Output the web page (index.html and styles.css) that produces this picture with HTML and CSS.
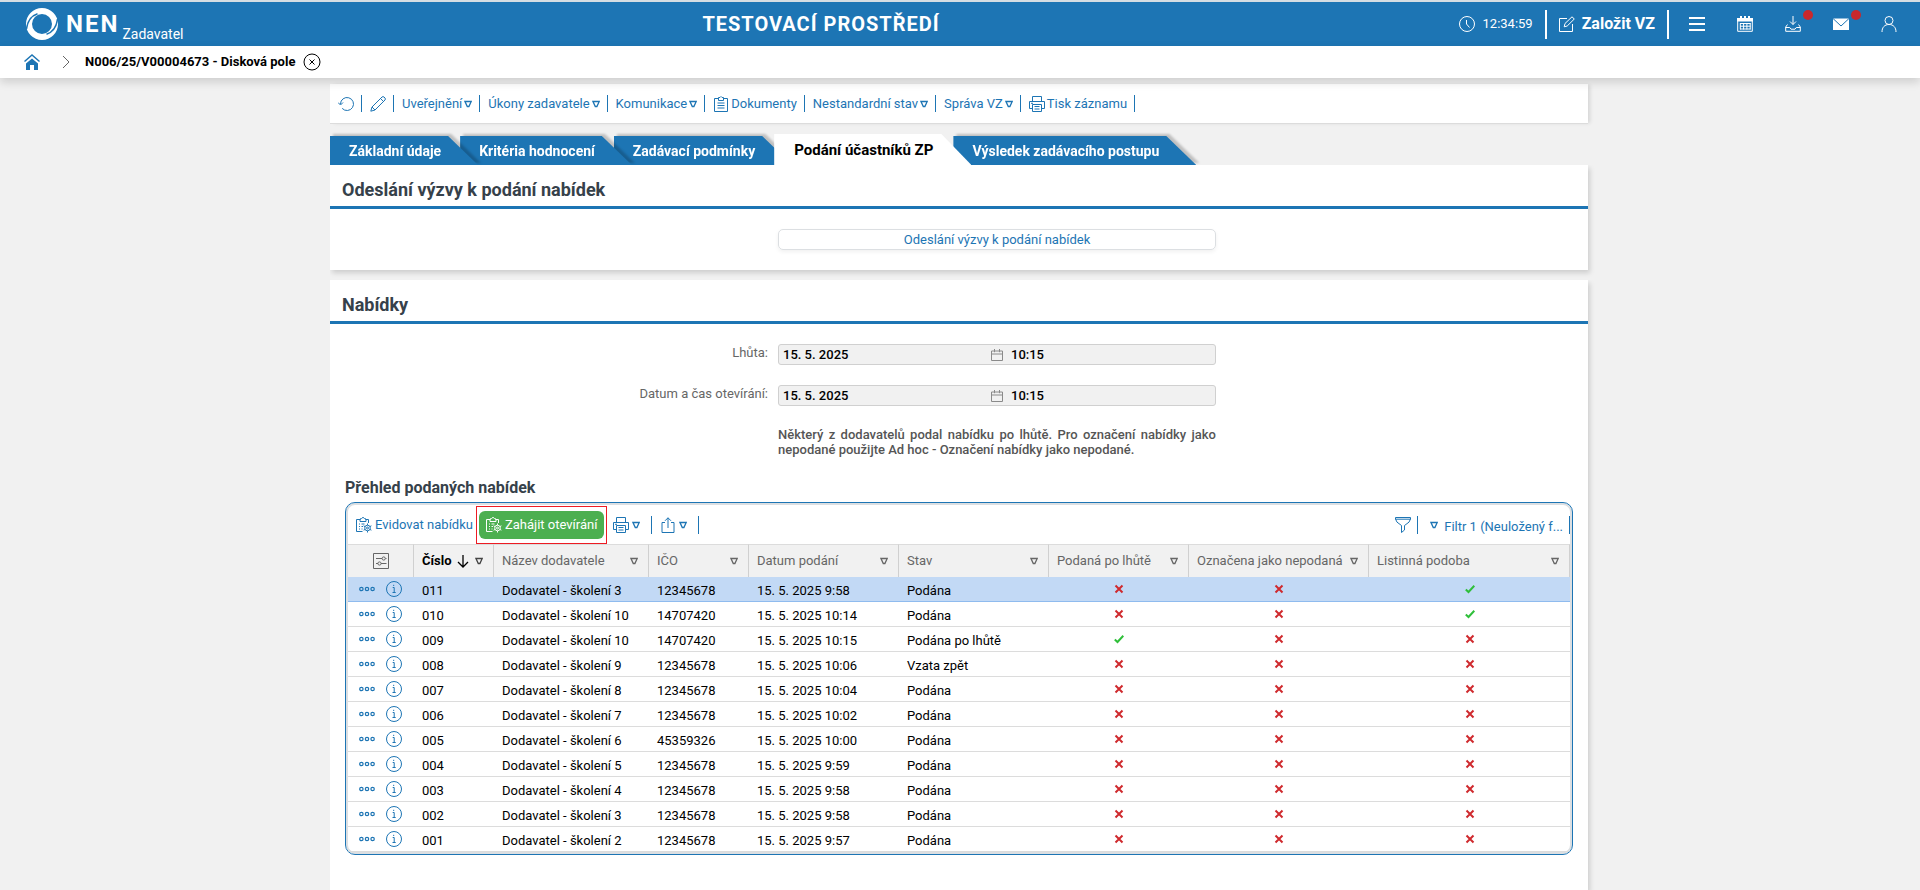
FILE: index.html
```html
<!DOCTYPE html>
<html lang="cs">
  <head>
    <meta charset="utf-8">
    <title>NEN - Disková pole</title>
    <link rel="stylesheet" href="styles.css">
  </head>
  <body>
    <svg class="sprite" aria-hidden="true">
      <symbol id="i-tri" viewBox="0 0 8 8"><path d="M1 1.5h6.2L4.9 6.5H3.3z"/></symbol>
      <symbol id="i-print" viewBox="0 0 16 16"><path d="M3.5 5.5v-5h9v5M3.5 12.500h-3v-7h15v7h-3M3.500 8.500h9v7h-9zM5.500 10.500h5M5.500 13h5M2 7.300h2"/></symbol>
      <symbol id="i-clip" viewBox="0 0 16 16"><path d="M5.500 2.500h-4v13h13v-13h-4M5.500 4.500v-3h1.500l1-1 1 1h1.500v3zM4.500 7h7M4.500 9.500h7M4.500 12h7"/></symbol>
      <symbol id="i-clipgear" viewBox="0 0 16 16">
        <path d="M4.500 2.500h-4v12h6M9.500 2.500h3v3.500M4 4.500v-2.500l1.500-.5 1.500-1.200 1.500 1.200 1.500.5v2.500zM3 7h1M5.500 7h3M3 9.500h1M5.500 9.500h1.500M3 12h1M5.500 12h1"/>
        <path d="M11.500 6.500v1.700M11.500 13.800v1.700M7.600 8.800l1.500.8M13.900 12.400l1.500.8M7.600 13.200l1.500-.8M13.900 9.600l1.500-.8"/>
        <circle cx="11.500" cy="11" r="2.800"/><circle cx="11.500" cy="11" r="1"/>
      </symbol>
      <symbol id="i-info" viewBox="0 0 16 16"><circle cx="8" cy="8" r="7.500"/><path d="M6.700 6.500h1.500v5M6.500 11.500h3.200M7.700 3.800v1.200"/></symbol>
      <symbol id="i-dots" viewBox="0 0 16 6"><circle cx="2.400" cy="3" r="1.700"/><circle cx="8" cy="3" r="1.700"/><circle cx="13.600" cy="3" r="1.700"/></symbol>
      <symbol id="i-no" viewBox="0 0 10 10"><path d="M1.500 1.500l7 7M8.500 1.500l-7 7"/></symbol>
      <symbol id="i-yes" viewBox="0 0 10 10"><path d="M.8 5.500l2.700 2.500L9.300 1.800"/></symbol>
      <symbol id="i-cal" viewBox="0 0 12 12"><path d="M.5 2h11v9.500H.5zM.5 5h11M3.500 0v3.200M8.500 0v3.200"/></symbol>
    </svg>

    <header class="topbar">
      <a href="#" class="brand">
        <svg class="logo" viewBox="0 0 32 32">
          <path fill-rule="evenodd" fill="#fff" d="M16 0a16 16 0 1 1 0 32a16 16 0 1 1 0-32zM16 6a10 10 0 1 0 0 20a10 10 0 1 0 0-20z"/>
          <path fill="none" stroke="#1d75b4" stroke-width="1.500" d="M.5 21C1.500 13 5 8 11.500 5.800M31.500 11C30.500 19 27 24 20.500 26.200"/>
        </svg>
        <span class="brand-name">NEN</span>
        <span class="brand-role">Zadavatel</span>
      </a>
      <div class="env">TESTOVACÍ PROSTŘEDÍ</div>
      <div class="top-right">
        <div class="clock">
          <svg class="ico" viewBox="0 0 16 16"><circle cx="8" cy="8" r="7.500"/><path d="M7.500 4v4l3 3.500"/></svg>
          <span>12:34:59</span>
        </div>
        <button class="new-vz">
          <svg class="ico" viewBox="0 0 16 16"><path d="M8 2.500H.5v13h13V8M6 7.500L13 .8l2.300 2.200L8.200 10l-3 .8z"/></svg>
          Založit VZ
        </button>
        <nav class="top-icons">
          <button aria-label="Menu"><svg class="ico thick" viewBox="0 0 16 16"><path d="M0 2h16M0 8h16M0 14h16"/></svg></button>
          <button aria-label="Kalendář">
            <svg class="ico" viewBox="0 0 16 16"><path class="solid" d="M0 2h16v3.500H0zM3 0h2v3H3zM7 0h2v3H7zM11 0h2v3h-2z"/><path d="M.7 4v11.300h14.600V4M3 7.500h10.500M3 10.200h10.500M3 13h10.500M3.300 7v6.500M6.600 7v6.500M9.900 7v6.500M13.200 7v6.500"/></svg>
          </button>
          <button aria-label="Stažené soubory">
            <svg class="ico" viewBox="0 0 16 16"><path d="M8 0v8.500M5 5.500l3 3 3-3M2.500 8.500L.7 11v4.300h14.600V11l-1.800-2.500M.7 11.500h4l1.300 1.700h4l1.300-1.700h4"/></svg>
            <span class="dot"></span>
          </button>
          <button aria-label="Zprávy">
            <svg class="ico" viewBox="0 0 16 16"><path class="solid" d="M0 2.500h16v11.500H0z"/><path class="cut" d="M0 2.500l8 7.500 8-7.500"/></svg>
            <span class="dot"></span>
          </button>
          <button aria-label="Uživatel"><svg class="ico" viewBox="0 0 16 16"><circle cx="8" cy="4.500" r="4"/><path d="M1 16c0-4.500 2.500-7.500 7-7.500s7 3 7 7.500"/></svg></button>
        </nav>
      </div>
    </header>

    <nav class="crumbs">
      <a href="#" class="home" aria-label="Domů">
        <svg viewBox="0 0 16 16"><path fill="#1d75b4" d="M8 4.500l6 5V16h-4v-5H6v5H2V9.500z"/><path fill="none" stroke="#1d75b4" stroke-width="1.500" d="M.5 7.500L8 1l7.500 6.500"/></svg>
      </a>
      <svg class="chevron" viewBox="0 0 8 14"><path d="M1 1l6 6-6 6"/></svg>
      <span class="crumb">N006/25/V00004673 - Disková pole</span>
      <button class="close" aria-label="Zavřít"><svg viewBox="0 0 18 18"><circle cx="9" cy="9" r="8"/><path d="M6.500 6.500l5 5M11.500 6.500l-5 5"/></svg></button>
    </nav>

    <main>
      <div class="toolbar">
        <button aria-label="Obnovit"><svg class="ico" viewBox="0 0 16 16"><path d="M2.500 8a6.500 6.500 0 1 1 1.700 4.400M0 6.500l2.500 2.500L5 6.500"/></svg></button>
        <button aria-label="Upravit"><svg class="ico" viewBox="0 0 16 16"><path d="M.8 15.200L2 11 12 1q1-.8 2 0l1 1q.8 1 0 2L5 14zM2 11l3 3M10.500 2.500l3 3"/></svg></button>
        <button>Uveřejnění <svg class="tri"><use href="#i-tri"/></svg></button>
        <button>Úkony zadavatele <svg class="tri"><use href="#i-tri"/></svg></button>
        <button>Komunikace <svg class="tri"><use href="#i-tri"/></svg></button>
        <button><svg class="ico"><use href="#i-clip"/></svg> Dokumenty</button>
        <button>Nestandardní stav <svg class="tri"><use href="#i-tri"/></svg></button>
        <button>Správa VZ <svg class="tri"><use href="#i-tri"/></svg></button>
        <button><svg class="ico"><use href="#i-print"/></svg> Tisk záznamu</button>
      </div>

      <ul class="tabs">
        <li><button>Základní údaje</button></li>
        <li><button>Kritéria hodnocení</button></li>
        <li><button>Zadávací podmínky</button></li>
        <li class="active"><button>Podání účastníků ZP</button></li>
        <li><button>Výsledek zadávacího postupu</button></li>
      </ul>

      <section class="card">
        <h2>Odeslání výzvy k podání nabídek</h2>
        <div class="form">
          <button class="wide-btn">Odeslání výzvy k podání nabídek</button>
        </div>
      </section>

      <section class="card last">
        <h2>Nabídky</h2>
        <div class="form">
          <label for="lhuta">Lhůta:</label>
          <div class="field">
            <input type="text" id="lhuta" class="date" value="15. 5. 2025" readonly>
            <svg class="cal"><use href="#i-cal"/></svg>
            <input type="text" class="time" aria-label="Lhůta - čas" value="10:15" readonly>
          </div>
          <label for="otevirani">Datum a čas otevírání:</label>
          <div class="field">
            <input type="text" id="otevirani" class="date" value="15. 5. 2025" readonly>
            <svg class="cal"><use href="#i-cal"/></svg>
            <input type="text" class="time" aria-label="Otevírání - čas" value="10:15" readonly>
          </div>
          <p class="note">Některý z dodavatelů podal nabídku po lhůtě. Pro označení nabídky jako nepodané použijte Ad hoc - Označení nabídky jako nepodané.</p>
        </div>

        <h3>Přehled podaných nabídek</h3>
        <div class="grid-box">
          <div class="grid-bar">
            <button class="bar-btn"><svg class="ico"><use href="#i-clipgear"/></svg> Evidovat nabídku</button>
            <div class="marked">
              <button class="open-btn"><svg class="ico"><use href="#i-clipgear"/></svg> Zahájit otevírání</button>
            </div>
            <button class="bar-btn sep" aria-label="Tisk"><svg class="ico"><use href="#i-print"/></svg> <svg class="tri"><use href="#i-tri"/></svg></button>
            <button class="bar-btn sep" aria-label="Export"><svg class="ico" viewBox="0 0 16 16"><path d="M5 5.500H2v10h12v-10h-3M8 11V.8M5 3.800l3-3 3 3"/></svg> <svg class="tri"><use href="#i-tri"/></svg></button>
            <div class="filter">
              <button class="bar-btn sep" aria-label="Filtr"><svg class="ico" viewBox="0 0 16 16"><path d="M.5.500h15v1.500Q15.500 5 9.500 8.500V13l-3 2.500v-7Q.5 5 .5 2zM.5 2.200h15"/></svg></button>
              <button class="bar-btn sep filter-name"><svg class="tri"><use href="#i-tri"/></svg> <span>Filtr 1 (Neuložený f...</span></button>
            </div>
          </div>
          <table>
            <colgroup>
              <col class="c-act"><col class="c-num"><col class="c-name"><col class="c-ico"><col class="c-date"><col class="c-state"><col class="c-late"><col class="c-mark"><col>
            </colgroup>
            <thead>
              <tr>
                <th class="settings"><svg class="ico" viewBox="0 0 16 16"><path d="M.5.500h15v15H.5zM3 5.500h6M12.500 5.500h1M3 10.500h2M8 10.500h5.500"/><circle cx="10.700" cy="5.500" r="1.600"/><circle cx="6.500" cy="10.500" r="1.600"/></svg></th>
                <th class="sorted"><div>Číslo <svg class="arrow" viewBox="0 0 12 14"><path d="M6 1v12M1 8l5 5 5-5"/></svg> <svg class="tri"><use href="#i-tri"/></svg></div></th>
                <th><div>Název dodavatele <svg class="tri"><use href="#i-tri"/></svg></div></th>
                <th><div>IČO <svg class="tri"><use href="#i-tri"/></svg></div></th>
                <th><div>Datum podání <svg class="tri"><use href="#i-tri"/></svg></div></th>
                <th><div>Stav <svg class="tri"><use href="#i-tri"/></svg></div></th>
                <th><div>Podaná po lhůtě <svg class="tri"><use href="#i-tri"/></svg></div></th>
                <th><div>Označena jako nepodaná <svg class="tri"><use href="#i-tri"/></svg></div></th>
                <th><div>Listinná podoba <svg class="tri"><use href="#i-tri"/></svg></div></th>
              </tr>
            </thead>
            <tbody id="rows"></tbody>
          </table>
        </div>
      </section>
    </main>

    <script>
      // cislo, dodavatel, ico, datum, stav, po lhute, nepodana, listinna
      const offers = [
        ["011", "Dodavatel - školení 3", "12345678", "15. 5. 2025 9:58", "Podána", 0, 0, 1],
        ["010", "Dodavatel - školení 10", "14707420", "15. 5. 2025 10:14", "Podána", 0, 0, 1],
        ["009", "Dodavatel - školení 10", "14707420", "15. 5. 2025 10:15", "Podána po lhůtě", 1, 0, 0],
        ["008", "Dodavatel - školení 9", "12345678", "15. 5. 2025 10:06", "Vzata zpět", 0, 0, 0],
        ["007", "Dodavatel - školení 8", "12345678", "15. 5. 2025 10:04", "Podána", 0, 0, 0],
        ["006", "Dodavatel - školení 7", "12345678", "15. 5. 2025 10:02", "Podána", 0, 0, 0],
        ["005", "Dodavatel - školení 6", "45359326", "15. 5. 2025 10:00", "Podána", 0, 0, 0],
        ["004", "Dodavatel - školení 5", "12345678", "15. 5. 2025 9:59", "Podána", 0, 0, 0],
        ["003", "Dodavatel - školení 4", "12345678", "15. 5. 2025 9:58", "Podána", 0, 0, 0],
        ["002", "Dodavatel - školení 3", "12345678", "15. 5. 2025 9:58", "Podána", 0, 0, 0],
        ["001", "Dodavatel - školení 2", "12345678", "15. 5. 2025 9:57", "Podána", 0, 0, 0]
      ];

      function flag(value) {
        return value
          ? '<td class="flag"><svg class="yes"><use href="#i-yes"/></svg></td>'
          : '<td class="flag"><svg class="no"><use href="#i-no"/></svg></td>';
      }

      document.getElementById("rows").innerHTML = offers.map(function (o, i) {
        return '<tr' + (i === 0 ? ' class="selected"' : '') + '>' +
          '<td class="actions">' +
          '<button aria-label="Akce"><svg class="dots"><use href="#i-dots"/></svg></button>' +
          '<button aria-label="Detail"><svg class="ico"><use href="#i-info"/></svg></button></td>' +
          o.slice(0, 5).map(function (v) { return '<td>' + v + '</td>'; }).join('') +
          o.slice(5).map(flag).join('') + '</tr>';
      }).join('');
    </script>
  </body>
</html>
```
FILE: styles.css
```css
* {
  box-sizing: border-box;
}
body {
  margin: 0;
  min-height: 100vh;
  display: flex;
  flex-direction: column;
  background: #f1f1f1;
  color: #000;
  font-family: Roboto, "Liberation Sans", sans-serif;
  font-size: 13px;
  line-height: 16px;
}
button {
  padding: 0;
  border: 0;
  background: none;
  color: inherit;
  font: inherit;
  cursor: pointer;
}
.sprite {
  position: absolute;
  width: 0;
  height: 0;
}
.ico {
  width: 16px;
  height: 16px;
  flex: none;
  fill: none;
  stroke: currentColor;
  stroke-width: 1;
}
.tri {
  width: 8px;
  height: 8px;
  flex: none;
  fill: none;
  stroke: currentColor;
  stroke-width: 1.3;
}

/* top bar */
.topbar {
  display: flex;
  justify-content: space-between;
  align-items: center;
  height: 46px;
  padding: 0 7px 0 26px;
  border-top: 2px solid #d5dde3;
  background: #1d75b4;
  color: #fff;
}
.brand {
  display: flex;
  align-items: center;
  color: #fff;
  text-decoration: none;
}
.logo {
  width: 32px;
  height: 32px;
  margin-right: 8px;
}
.brand-name {
  font-size: 24px;
  font-weight: 700;
  letter-spacing: 2px;
}
.brand-role {
  align-self: flex-end;
  margin-left: 3px;
  font-size: 14px;
  line-height: 12px;
}
.env {
  font-size: 20px;
  font-weight: 700;
  letter-spacing: 1px;
}
.top-right {
  display: flex;
  align-items: center;
}
.clock,
.new-vz {
  display: flex;
  align-items: center;
  gap: 8px;
  height: 29px;
  padding-right: 12px;
  border-right: 2px solid #fff;
}
.new-vz {
  padding-left: 12px;
  gap: 7px;
  font-size: 16px;
  font-weight: 700;
}
.top-icons {
  display: flex;
  margin-left: 4px;
}
.top-icons button {
  position: relative;
  display: flex;
  justify-content: center;
  align-items: center;
  width: 48px;
  height: 44px;
}
.thick {
  stroke-width: 2;
}
.solid {
  fill: #fff;
  stroke: none;
}
.cut {
  stroke: #1d75b4;
}
.dot {
  position: absolute;
  top: 8px;
  right: 4px;
  width: 10px;
  height: 10px;
  border-radius: 50%;
  background: #c9282d;
}

/* breadcrumbs */
.crumbs {
  position: relative;
  z-index: 10;
  display: flex;
  align-items: center;
  height: 32px;
  padding-left: 24px;
  background: #fff;
  box-shadow: 0 4px 10px rgba(0, 0, 0, .15);
}
.home {
  width: 16px;
  height: 16px;
}
.home svg,
.close svg {
  display: block;
}
.chevron {
  width: 8px;
  height: 14px;
  margin: 0 15px 0 22px;
  fill: none;
  stroke: #666;
}
.crumb {
  font-weight: 700;
}
.close {
  width: 18px;
  height: 18px;
  margin-left: 8px;
}
.close svg {
  fill: none;
  stroke: #000;
}

main {
  display: flex;
  flex-direction: column;
  flex: 1;
  width: 100%;
  max-width: 1260px;
  margin: 6px auto 0;
  padding-right: 2px;
}

/* record toolbar */
.toolbar {
  display: flex;
  align-items: center;
  height: 40px;
  border-bottom: 1px solid #dcdcdc;
  background: #fff;
  box-shadow: 3px 0 4px -1px rgba(0, 0, 0, .12);
  color: #1d75b4;
}
.toolbar button {
  display: flex;
  align-items: center;
  gap: 2px;
  height: 17px;
  padding: 0 7px 0 8px;
  border-right: 1px solid #1d75b4;
}

/* tabs */
.tabs {
  display: flex;
  align-items: flex-end;
  height: 41px;
  margin: 0;
  padding: 0;
  list-style: none;
}
.tabs li {
  position: relative;
  margin-right: -18px;
  filter: drop-shadow(3px -2px 1px rgba(0, 0, 0, .2));
}
.tabs li:nth-child(1) {
  z-index: 3;
}
.tabs li:nth-child(2) {
  z-index: 2;
}
.tabs li.active {
  z-index: 4;
  filter: none;
}
.tabs button {
  display: block;
  height: 29px;
  padding: 0 37px 0 19px;
  background: #1d75b4;
  clip-path: polygon(0 0, calc(100% - 30px) 0, 100% 100%, 0 100%);
  color: #fff;
  font-size: 14px;
  font-weight: 700;
}
.tabs .active button {
  height: 31px;
  padding: 0 38px 0 20px;
  background: #fff;
  color: #000;
  font-size: 15px;
}

/* cards */
.card {
  position: relative;
  z-index: 5;
  margin-bottom: 10px;
  background: #fff;
  box-shadow: 2px 3px 5px rgba(0, 0, 0, .15);
  clip-path: inset(0 -10px -10px 0);
}
.card.last {
  flex: 1;
  margin-bottom: 0;
}
h2 {
  margin: 0;
  height: 44px;
  padding: 13px 12px 0;
  border-bottom: 3px solid #1d75b4;
  color: #36414a;
  font-size: 18px;
  line-height: 24px;
}
.form {
  display: grid;
  grid-template-columns: 438px 438px;
  column-gap: 10px;
  row-gap: 20px;
  padding: 20px 0;
}
.form label {
  padding-top: 1px;
  color: #666;
  text-align: right;
}
.wide-btn {
  grid-column: 2;
  height: 21px;
  border: 1px solid #dcdfe2;
  border-radius: 5px;
  box-shadow: 0 2px 4px rgba(0, 0, 0, .06);
  color: #1d75b4;
}
.field {
  display: flex;
  align-items: center;
  height: 21px;
  border: 1px solid #d0d0d0;
  border-radius: 3px;
  background: #f1f1f1;
}
.field input {
  min-width: 0;
  padding: 0;
  border: 0;
  background: none;
  font: inherit;
  font-weight: 500;
  outline: none;
}
.field .date {
  width: 212px;
  padding-left: 4px;
}
.cal {
  width: 12px;
  height: 12px;
  margin-right: 8px;
  fill: none;
  stroke: #8a8a8a;
}
.time {
  flex: 1;
}
.note {
  grid-column: 2;
  margin: 1px 0 0;
  color: #555;
  font-weight: 500;
  line-height: 15px;
  text-align: justify;
}

/* offers grid */
h3 {
  margin: 0;
  padding-left: 15px;
  color: #36414a;
  font-size: 16px;
  line-height: 22px;
}
.grid-box {
  margin: 3px 15px 0;
  overflow: hidden;
  padding: 2px;
  border: 1px solid #1d75b4;
  border-radius: 10px;
  box-shadow: inset 0 0 0 2px #dcdfe2;
}
.grid-bar {
  display: flex;
  align-items: center;
  height: 39px;
  padding: 1px 0 0 8px;
  color: #1d75b4;
}
.bar-btn {
  display: flex;
  align-items: center;
  gap: 3px;
}
.marked {
  margin: 0 6px 0 3px;
  padding: 4px 2px;
  border: 1px solid #ed1c24;
}
.open-btn {
  display: flex;
  align-items: center;
  gap: 3px;
  height: 28px;
  padding: 0 7px;
  border-radius: 6px;
  background: #4caf50;
  color: #fff;
}
.sep {
  height: 18px;
  padding-right: 11px;
  border-right: 1px solid #1d75b4;
}
.sep + .sep {
  padding-left: 8px;
}
.filter {
  display: flex;
  margin-left: auto;
}
.filter .sep {
  padding-right: 6px;
}
.filter .filter-name {
  gap: 6px;
  padding-left: 12px;
}
.filter-name span {
  padding-top: 3px;
}

table {
  width: 100%;
  border-collapse: separate;
  border-spacing: 0;
  table-layout: fixed;
}
.c-act { width: 66px; }
.c-num { width: 80px; }
.c-name { width: 155px; }
.c-ico { width: 100px; }
.c-date { width: 150px; }
.c-state { width: 150px; }
.c-late { width: 140px; }
.c-mark { width: 180px; }
th {
  height: 33px;
  padding: 0 10px 0 8px;
  border-top: 1px solid #dcdcdc;
  border-right: 1px solid #d0d0d0;
  background: #f1f1f1;
  color: #666;
  font-weight: 400;
  text-align: left;
}
th div {
  display: flex;
  align-items: center;
  white-space: nowrap;
}
th .tri {
  margin-left: auto;
}
.sorted {
  font-weight: 700;
  color: #000;
}
.sorted .tri {
  color: #444;
}
.arrow {
  width: 12px;
  height: 14px;
  margin-left: 5px;
  fill: none;
  stroke: #000;
  stroke-width: 1.3;
}
.settings {
  padding: 0;
}
.settings .ico {
  display: block;
  margin: 0 auto;
}
td {
  height: 25px;
  padding: 3px 8px 0;
  border-bottom: 1px solid #dcdcdc;
  white-space: nowrap;
}
.selected td {
  border-bottom-color: #8fbbee;
  background: #c2d9f5;
}
td.actions {
  padding: 0 0 0 11px;
  color: #1d75b4;
}
.actions button {
  float: left;
  display: flex;
  align-items: center;
  height: 16px;
  margin-right: 11px;
}
.actions button + button {
  margin-right: 0;
}
.dots {
  width: 16px;
  height: 6px;
  fill: none;
  stroke: currentColor;
  stroke-width: 1.2;
}
td.flag {
  padding: 0;
}
.flag svg {
  display: block;
  width: 10px;
  height: 10px;
  margin: 0 auto;
  fill: none;
  stroke-width: 2;
}
.no {
  stroke: #cf2a2e;
}
.yes {
  stroke: #2fbf3a;
}
```
